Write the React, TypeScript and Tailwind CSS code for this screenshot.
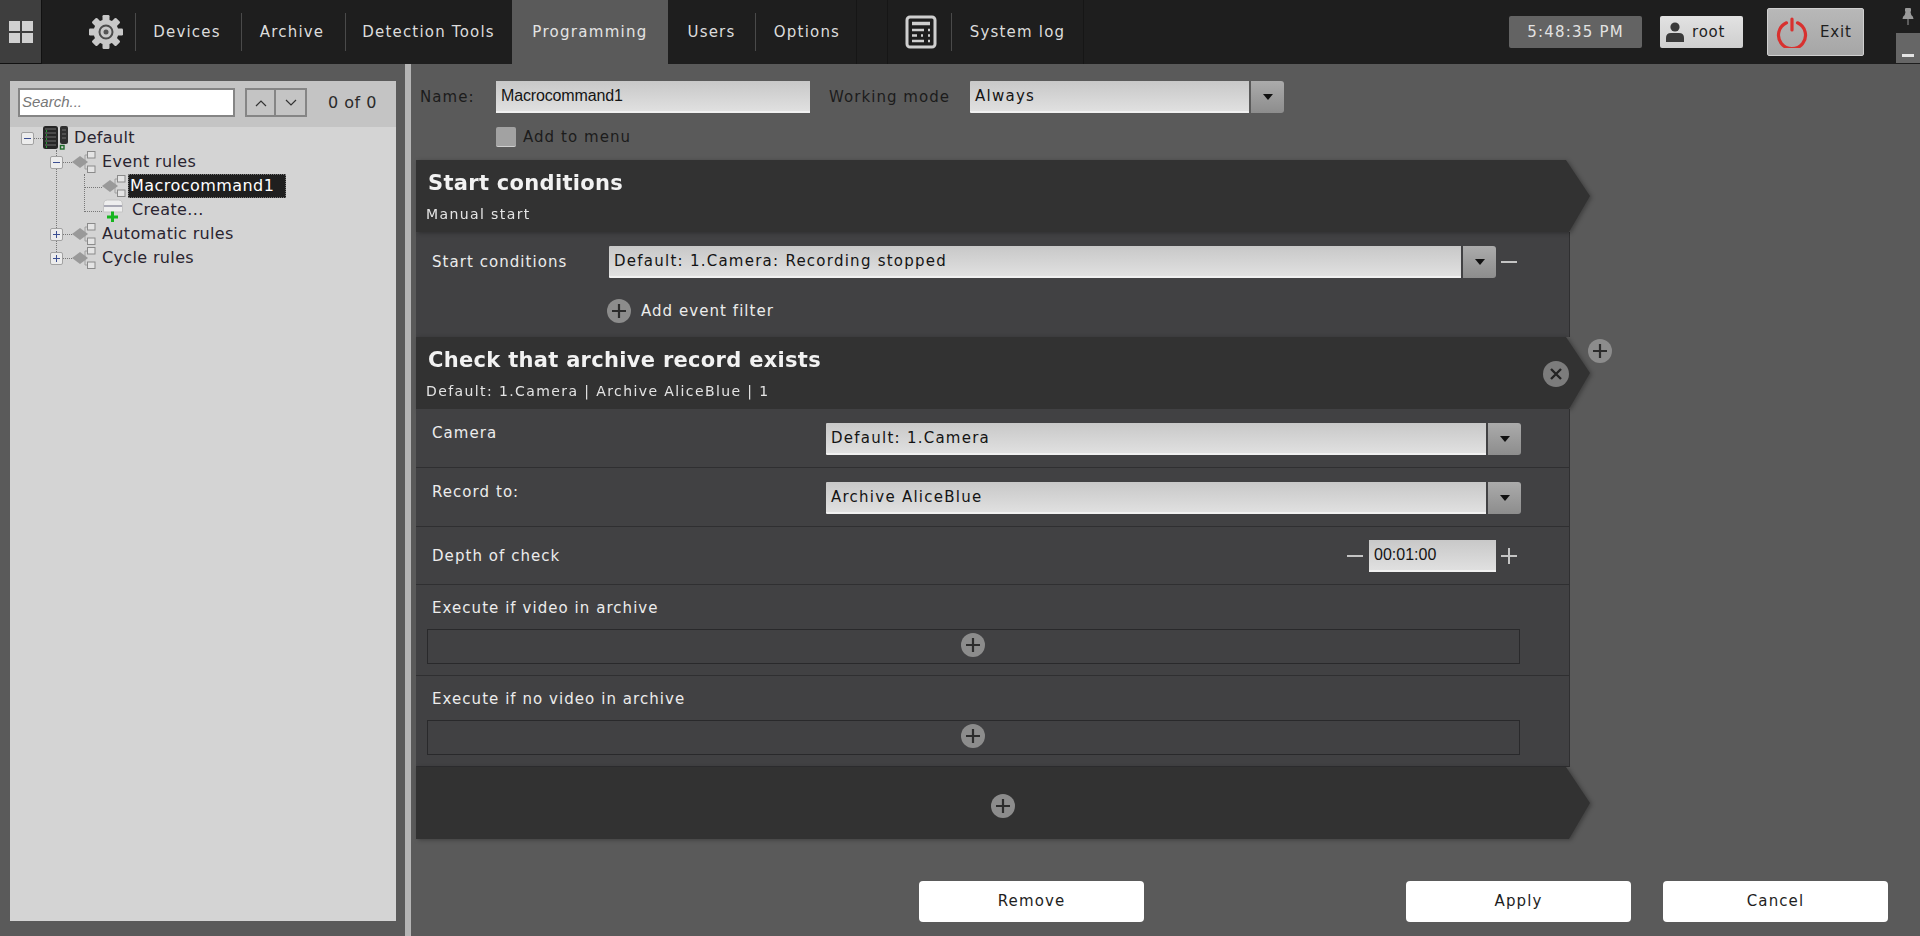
import React from 'react';

const dv = { fontFamily: '"DejaVu Sans", sans-serif' };

const Sep = () => <div className="w-px h-[38px] bg-[#4a4a4a] shrink-0" />;
const FaintSep = () => <div className="w-px h-full bg-[#161616] shrink-0" />;

const NavItem = ({ label, w, pr }: { label: string; w: string; pr?: string }) => (
  <div className={`${w} ${pr ?? ''} h-full flex items-center justify-center text-[15px] tracking-[1.2px] text-[#dcdcdc] shrink-0`}>{label}</div>
);

const Gear = () => (
  <svg viewBox="0 0 36 36" className="w-9 h-9">
    <g fill="#c8c8c8">
      {[0, 45, 90, 135, 180, 225, 270, 315].map(a => (
        <rect key={a} x="14.5" y="1" width="7" height="8" rx="1.2" transform={`rotate(${a} 18 18)`} />
      ))}
    </g>
    <circle cx="18" cy="18" r="12.5" fill="#c8c8c8" />
    <circle cx="18" cy="18" r="6.5" fill="none" stroke="#4c4c4c" strokeWidth="2" />
    <circle cx="18" cy="18" r="2.5" fill="#555555" />
  </svg>
);

const LogIcon = () => (
  <svg viewBox="0 0 32 34" className="w-8 h-[34px]" fill="none" stroke="#cfcfcf">
    <rect x="2" y="2" width="28" height="30" rx="3" strokeWidth="3" />
    <path d="M7 8.5h18" strokeWidth="3.5" />
    <path d="M7 15h12M23 15h2M7 20.5h5M16 20.5h2M23 20.5h2M7 26h12M23 26h2" strokeWidth="2.4" />
  </svg>
);

const RuleIcon = () => (
  <svg viewBox="0 0 24 24" className="w-6 h-6 shrink-0">
    <path d="M12 12h2M13 5v14M13 5h3M13 19h3" stroke="#a0a0a0" fill="none" />
    <path d="M0 12l8-6 8 6-8 6z" fill="#999999" />
    <rect x="15.5" y="1.5" width="7.5" height="6.5" fill="#e4e4e4" stroke="#8a8a8a" />
    <rect x="15.5" y="16" width="7.5" height="6.5" fill="#e4e4e4" stroke="#8a8a8a" />
  </svg>
);

const ServerIcon = () => (
  <svg viewBox="0 0 25 24" className="w-[25px] h-6 shrink-0">
    <rect x="0" y="0" width="15" height="23" rx="2.5" fill="#262626" />
    <rect x="17" y="0" width="8" height="18" rx="2" fill="#303030" />
    <path d="M2 3h11M2 7h11M2 11h11M2 15h11M2 19h11M19 4h4M19 8h4M19 12h4" stroke="#6f6f6f" />
    <path d="M3 5h1M3 9h1M3 13h1M3 17h1M3 21h1" stroke="#27c23a" strokeWidth="1.4" />
    <rect x="17.5" y="19.5" width="3.5" height="3.5" fill="#d4d4d4" stroke="#1f6b2b" strokeWidth="1.4" />
  </svg>
);

const CreateIcon = () => (
  <svg viewBox="0 0 24 24" className="w-6 h-6 shrink-0">
    <path d="M1.5 7q0-5 4-5h11q4 0 4 5v7h-19z" fill="#eeeeee" stroke="#c4c4c4" />
    <path d="M2 8h18" stroke="#a9a9b5" strokeWidth="2" />
    <path d="M5 19h11M10.500 13.500v11" stroke="#16b51f" strokeWidth="3" />
  </svg>
);

const Expander = ({ open }: { open: boolean }) => (
  <div className="relative w-[13px] h-[13px] rounded-[2px] border border-[#a2a2a2] bg-[#ececec] shrink-0">
    <div className="absolute left-[2px] top-[5px] w-[7px] h-px bg-[#3c4f92]" />
    {!open && <div className="absolute left-[5px] top-[2px] w-px h-[7px] bg-[#3c4f92]" />}
  </div>
);

const TreeRow = ({ pl, open, icon, label, selected }: { pl: string; open?: boolean; icon: React.ReactNode; label: string; selected?: boolean }) => (
  <div className={`${pl} h-6 flex items-center`}>
    {open !== undefined && (
      <>
        <Expander open={open} />
        <div className="w-[9px] border-t border-dotted border-[#777] shrink-0" />
      </>
    )}
    {icon}
    {selected ? (
      <div className="ml-[2px] h-6 w-[158px] pl-[1px] flex items-center bg-[#1f1f1f] text-white tracking-[0.45px] border border-dotted border-[#777]">{label}</div>
    ) : (
      <div className="ml-[6px] text-[#2a2430]">{label}</div>
    )}
  </div>
);

const Caret = () => <div className="w-0 h-0 border-x-[5px] border-x-transparent border-t-[6px] border-t-[#111]" />;

const Select = ({ value, className }: { value: string; className: string }) => (
  <div className={`${className} flex shrink-0`}>
    <div className="flex-1 flex items-center pl-[5px] rounded-l-[1px] bg-linear-to-b from-[#c8c8c8] to-[#e0e0e0] border-b-2 border-[#f0f0f0] text-[#141414] text-[15px] tracking-[1.25px]">{value}</div>
    <div className="w-[33px] ml-[2px] flex items-center justify-center rounded-r-[3px] bg-linear-to-b from-[#ababab] to-[#8d8d8d]"><Caret /></div>
  </div>
);

const RoundPlus = () => (
  <svg viewBox="0 0 24 24" className="w-6 h-6 shrink-0">
    <circle cx="12" cy="12" r="12" fill="#8c8c8c" />
    <path d="M12 5v14M5 12h14" stroke="#2c2c2c" strokeWidth="2.2" />
  </svg>
);

const SectionHead = ({ title, sub, children }: { title?: string; sub?: string; children?: React.ReactNode }) => (
  <div className="relative w-[1174px] drop-shadow-[2px_1px_2px_rgba(0,0,0,0.3)]">
    <div className="h-[72px] pl-3 bg-[#323232] [clip-path:polygon(0_0,1150px_0,1174px_50%,1153px_100%,0_100%)]">
      {title && <div className="pt-[9px] h-9 leading-7 text-[21px] font-bold tracking-[0.3px] text-[#f2f2f2]">{title}</div>}
      {sub && <div className="mt-[9px] -ml-[2px] h-[18px] leading-[18px] text-[14px] tracking-[1.4px] text-[#e4e4e4]">{sub}</div>}
    </div>
    {children}
  </div>
);

const ExecRow = ({ label }: { label: string }) => (
  <div className="h-[91px] border-b border-[#2f2f31] pt-[13px]">
    <div className="pl-4 h-5 leading-5 text-[15px] tracking-[1.05px] text-[#ececec]">{label}</div>
    <div className="ml-[11px] mt-[11px] w-[1093px] h-[35px] border border-[#29292b] flex items-center justify-center pr-[2px] pb-[3px]">
      <RoundPlus />
    </div>
  </div>
);

const FootButton = ({ label, className }: { label: string; className: string }) => (
  <div className={`${className} w-[225px] h-[41px] bg-white rounded-[4px] flex items-center justify-center text-[15px] tracking-[1.1px] text-[#1e1e1e]`}>{label}</div>
);

export default function App() {
  return (
    <div className="w-[1920px] h-[936px] overflow-hidden flex flex-col bg-[#5a5a5a]" style={dv}>
      {/* top bar */}
      <div className="h-16 flex items-center bg-[#1e1e1e] shrink-0">
        <div className="w-[42px] h-full bg-[#3e3e3e] border-r border-b border-[#111] grid grid-cols-2 gap-[2px] content-center pl-[9px] pr-[8px] shrink-0">
          <div className="h-[10px] bg-[#d0d0d0]" /><div className="h-[10px] bg-[#d0d0d0]" />
          <div className="h-[10px] bg-[#d0d0d0]" /><div className="h-[10px] bg-[#d0d0d0]" />
        </div>
        <div className="w-[93px] h-full flex items-center justify-end pr-[11px] shrink-0"><Gear /></div>
        <Sep />
        <NavItem label="Devices" w="w-[105px]" pr="pr-[3px]" />
        <Sep />
        <NavItem label="Archive" w="w-[103px]" pr="pr-[3px]" />
        <Sep />
        <NavItem label="Detection Tools" w="w-[166px]" pr="pr-[1px]" />
        <div className="w-[156px] h-full bg-[#5a5a5a] flex items-center justify-center text-[15px] tracking-[1.3px] text-[#e4e4e4] shrink-0">Programming</div>
        <NavItem label="Users" w="w-[87px]" />
        <Sep />
        <NavItem label="Options" w="w-[100px]" pr="pl-[2px]" />
        <FaintSep />
        <div className="w-[30px] shrink-0" />
        <FaintSep />
        <div className="w-[17px] shrink-0" />
        <LogIcon />
        <div className="w-[14px] shrink-0" />
        <Sep />
        <NavItem label="System log" w="w-[131px]" />
        <FaintSep />
        <div className="ml-[425px] w-[133px] h-8 rounded-[2px] bg-[#636363] flex items-center justify-center text-[15px] tracking-[1.2px] text-[#e2e2e2] shrink-0">5:48:35 PM</div>
        <div className="ml-[18px] w-[83px] h-8 rounded-[2px] bg-linear-to-b from-[#e2e2e2] to-[#cfcfcf] flex items-center pl-[6px] gap-[8px] text-[15px] tracking-[0.8px] text-[#1e1e1e] shrink-0">
          <svg viewBox="0 0 18 20" className="w-[18px] h-5" fill="#3a3a3a">
            <circle cx="9" cy="5" r="4.6" />
            <path d="M0 20v-4q0-5 5-5h8q5 0 5 5v4z" />
          </svg>
          root
        </div>
        <div className="ml-[24px] w-[97px] h-12 rounded-[2px] bg-linear-to-b from-[#b8b8b8] to-[#a6a6a6] border border-[#cfcfcf] flex items-center pl-[8px] gap-[12px] text-[15px] tracking-[0.8px] text-[#1e1e1e] shrink-0">
          <svg viewBox="0 0 32 32" className="w-8 h-8" fill="none" stroke="#d8312f" strokeWidth="3.2" strokeLinecap="round">
            <path d="M10.500 6.800a13.500 13.500 0 1 0 11 0" />
            <path d="M16 3v11" />
          </svg>
          Exit
        </div>
        <div className="ml-auto w-6 h-full flex flex-col items-center shrink-0">
          <div className="h-[33px] flex items-center justify-center">
            <svg viewBox="0 0 12 18" className="w-3 h-[18px]" fill="#9a9a9a">
              <rect x="3" y="0" width="6" height="4" rx="1" />
              <path d="M3.500 4h5l.8 3q2.200 1.500 2.200 4H.5q0-2.500 2.200-4z" />
              <rect x="5.500" y="11" width="1" height="6" />
            </svg>
          </div>
          <div className="w-6 h-[30px] bg-[#666666] flex items-end justify-center pb-[6px]"><div className="w-3 h-[3px] bg-[#e4e4e4]" /></div>
        </div>
      </div>

      <div className="flex-1 flex min-h-0">
        {/* left panel */}
        <div className="w-[405px] pl-[10px] pr-[9px] pt-[17px] pb-[15px] shrink-0">
          <div className="h-full bg-[#d4d4d4] text-[16px] tracking-[0.35px]">
            <div className="h-[46px] bg-[#c4c4c4] flex items-center pl-2 pb-[3px]">
              <div className="w-[217px] h-[29px] bg-white border-2 border-[#858585] pl-[2px] flex items-center text-[15px] italic text-[#777] tracking-normal" style={{ fontFamily: '"Liberation Sans", sans-serif' }}>Search...</div>
              <div className="ml-[10px] flex border-2 border-[#858585] h-[29px] text-[#333]">
                <div className="w-[29px] flex items-center justify-center border-r-2 border-[#858585]">
                  <svg viewBox="0 0 12 8" className="w-3 h-2" fill="none" stroke="#333" strokeWidth="1.2"><path d="M1 7l5-5 5 5" /></svg>
                </div>
                <div className="w-[29px] flex items-center justify-center">
                  <svg viewBox="0 0 12 8" className="w-3 h-2" fill="none" stroke="#333" strokeWidth="1.2"><path d="M1 1l5 5 5-5" /></svg>
                </div>
              </div>
              <div className="ml-[21px] text-[#2a2a2a] text-[16px] tracking-[0.5px]">0 of 0</div>
            </div>
            <div className="relative -mt-px">
              <div className="absolute left-[46px] top-[24px] h-[108px] border-l border-dotted border-[#777]" />
              <div className="absolute left-[74px] top-[48px] h-[38px] border-l border-dotted border-[#777]" />
              <div className="absolute left-[74px] top-[61px] w-[18px] border-t border-dotted border-[#777]" />
              <div className="absolute left-[74px] top-[85px] w-[18px] border-t border-dotted border-[#777]" />
              <TreeRow pl="pl-[11px]" open icon={<ServerIcon />} label="Default" />
              <TreeRow pl="pl-[40px]" open icon={<RuleIcon />} label="Event rules" />
              <TreeRow pl="pl-[92px]" icon={<RuleIcon />} label="Macrocommand1" selected />
              <TreeRow pl="pl-[92px]" icon={<CreateIcon />} label="Create..." />
              <TreeRow pl="pl-[40px]" open={false} icon={<RuleIcon />} label="Automatic rules" />
              <TreeRow pl="pl-[40px]" open={false} icon={<RuleIcon />} label="Cycle rules" />
            </div>
          </div>
        </div>
        {/* splitter */}
        <div className="w-[6px] bg-[#b4b4b4] shrink-0" />
        {/* main */}
        <div className="flex-1 pl-[5px] pt-[17px] min-w-0">
          <div className="flex items-center h-8 text-[15px] tracking-[1.05px] text-[#1c1c1c]">
            <div className="w-[80px] pl-1">Name:</div>
            <div className="w-[314px] h-8 pl-[5px] flex items-center bg-linear-to-b from-[#c8c8c8] to-[#e0e0e0] border-b-2 border-[#f0f0f0] text-[16px] tracking-[-0.15px] text-[#141414]" style={{ fontFamily: '"Liberation Sans", sans-serif' }}>Macrocommand1</div>
            <div className="w-[160px] pl-[19px]">Working mode</div>
            <Select value="Always" className="w-[314px] h-8" />
          </div>
          <div className="mt-[14px] ml-[80px] flex items-center h-5 gap-[7px] text-[15px] tracking-[1.05px] text-[#1c1c1c]">
            <div className="w-5 h-5 rounded-[2px] bg-[#a2a2a2] border-b border-[#d0d0d0]" />
            Add to menu
          </div>

          <div className="mt-[13px] flex flex-col items-start">
            <SectionHead title="Start conditions" sub="Manual start" />
            <div className="w-[1154px] h-[105px] bg-[#414143] border-r border-[#2f2f31] pt-[14px]">
              <div className="flex items-center h-8">
                <div className="w-[193px] pl-4 text-[15px] tracking-[1.05px] text-[#ececec]">Start conditions</div>
                <Select value="Default: 1.Camera: Recording stopped" className="w-[887px] h-8" />
                <div className="ml-[5px] w-4 h-[2px] bg-[#c4c4c4]" />
              </div>
              <div className="mt-[21px] ml-[191px] flex items-center gap-[10px] text-[15px] tracking-[1.05px] text-[#ececec]">
                <RoundPlus />
                Add event filter
              </div>
            </div>

            <SectionHead title="Check that archive record exists" sub="Default: 1.Camera | Archive AliceBlue | 1">
              <div className="absolute left-[1127px] top-[24px]">
                <svg viewBox="0 0 26 26" className="w-[26px] h-[26px]">
                  <circle cx="13" cy="13" r="13" fill="#7c7c7c" />
                  <path d="M8 8l10 10M18 8L8 18" stroke="#232323" strokeWidth="2.4" />
                </svg>
              </div>
            </SectionHead>
            <div className="relative w-[1154px] bg-[#414143] border-r border-[#2f2f31]">
              <div className="absolute left-[1172px] -top-[70px]"><RoundPlus /></div>
              <div className="h-[59px] border-b border-[#2f2f31] flex items-start pt-[14px]">
                <div className="w-[410px] pl-4 h-5 leading-5 text-[15px] tracking-[1.05px] text-[#ececec]">Camera</div>
                <Select value="Default: 1.Camera" className="w-[695px] h-8" />
              </div>
              <div className="h-[59px] border-b border-[#2f2f31] flex items-start pt-[14px]">
                <div className="w-[410px] pl-4 h-5 leading-5 text-[15px] tracking-[1.05px] text-[#ececec]">Record to:</div>
                <Select value="Archive AliceBlue" className="w-[695px] h-8" />
              </div>
              <div className="h-[58px] border-b border-[#2f2f31] flex items-center">
                <div className="w-[931px] pl-4 pt-[2px] text-[15px] tracking-[1.05px] text-[#ececec]">Depth of check</div>
                <div className="w-4 h-[2px] bg-[#c4c4c4]" />
                <div className="ml-[6px] w-[127px] h-8 pl-[5px] flex items-center bg-linear-to-b from-[#c8c8c8] to-[#e0e0e0] border-b-2 border-[#f0f0f0] text-[16px] tracking-normal text-[#141414]" style={{ fontFamily: '"Liberation Sans", sans-serif' }}>00:01:00</div>
                <div className="relative ml-[5px] w-4 h-4">
                  <div className="absolute left-0 top-[7px] w-4 h-[2px] bg-[#c4c4c4]" />
                  <div className="absolute left-[7px] top-0 w-[2px] h-4 bg-[#c4c4c4]" />
                </div>
              </div>
              <ExecRow label="Execute if video in archive" />
              <ExecRow label="Execute if no video in archive" />
            </div>
            <SectionHead>
              <div className="absolute left-[575px] top-[27px]"><RoundPlus /></div>
            </SectionHead>
          </div>

          <div className="mt-[42px] flex">
            <FootButton label="Remove" className="ml-[503px]" />
            <FootButton label="Apply" className="ml-[262px]" />
            <FootButton label="Cancel" className="ml-[32px]" />
          </div>
        </div>
      </div>
    </div>
  );
}
